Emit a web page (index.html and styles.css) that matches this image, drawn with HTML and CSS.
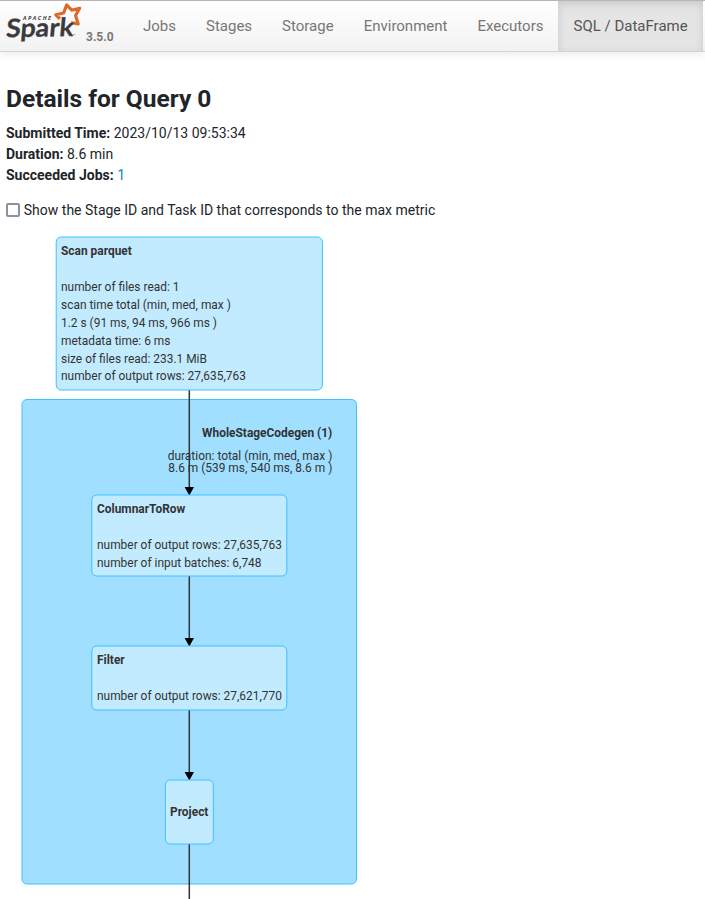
FILE: index.html
```html
<!DOCTYPE html>
<html lang="en">
<head>
<meta charset="utf-8">
<title>Details for Query 0</title>
<link rel="stylesheet" href="styles.css">
</head>
<body>
<nav class="navbar">
  <a class="brand" href="#">
    <svg class="logo" width="78" height="46" viewBox="0 0 78 46" aria-label="Apache Spark">
      <path class="star" d="M54 17.8 L49.8 13.8 L57.6 12 L60.6 4 L65.8 9.2 L73.6 7.2 L69.6 14.6 L72.2 23 L65 21.6"/>
      <g transform="translate(-.5 36.2) rotate(-1) skewX(-6)">
        <text class="logo-name" x="0" y="0" textLength="67.5" lengthAdjust="spacingAndGlyphs">Spark</text>
      </g>
      <text class="logo-top" x="17" y="19" textLength="28">APACHE</text>
      <text class="logo-tm" x="67" y="36">™</text>
    </svg>
    <span class="version">3.5.0</span>
  </a>
  <ul class="tabs">
    <li><a href="#">Jobs</a></li>
    <li><a href="#">Stages</a></li>
    <li><a href="#">Storage</a></li>
    <li><a href="#">Environment</a></li>
    <li><a href="#">Executors</a></li>
    <li class="active"><a href="#">SQL / DataFrame</a></li>
  </ul>
</nav>
<main>
  <h3>Details for Query 0</h3>
  <ul class="summary">
    <li><strong>Submitted Time:</strong> 2023/10/13 09:53:34</li>
    <li><strong>Duration:</strong> 8.6 min</li>
    <li><strong>Succeeded Jobs:</strong> <a href="#">1</a></li>
  </ul>
  <label class="toggle"><input type="checkbox"><span>Show the Stage ID and Task ID that corresponds to the max metric</span></label>
</main>
<svg class="plan" width="705" height="671" viewBox="0 228 705 671">
  <rect class="cluster" x="22" y="399.5" width="334.5" height="484.5" rx="5"/>
  <text class="title" x="332.3" y="437" text-anchor="end">WholeStageCodegen (1)</text>
  <text x="332.3" y="460" text-anchor="end">duration: total (min, med, max )</text>
  <text x="332.3" y="472" text-anchor="end">8.6 m (539 ms, 540 ms, 8.6 m )</text>

  <g class="edges">
    <path d="M189.3 390V488M189.3 576V639M189.3 710V773M189.3 844V899"/>
    <path class="head" d="M184.6 487h9.4l-4.7 8.5zM184.6 638h9.4l-4.7 8.5zM184.6 772h9.4l-4.7 8.5z"/>
  </g>

  <rect class="node" x="56.2" y="237" width="266.2" height="153" rx="5"/>
  <text class="title" x="61" y="255">Scan parquet</text>
  <text x="61" y="291">number of files read: 1</text>
  <text x="61" y="309">scan time total (min, med, max )</text>
  <text x="61" y="327">1.2 s (91 ms, 94 ms, 966 ms )</text>
  <text x="61" y="345">metadata time: 6 ms</text>
  <text x="61" y="363">size of files read: 233.1 MiB</text>
  <text x="61" y="380">number of output rows: 27,635,763</text>

  <rect class="node" x="91.8" y="495" width="195" height="81" rx="5"/>
  <text class="title" x="97" y="513">ColumnarToRow</text>
  <text x="97" y="549">number of output rows: 27,635,763</text>
  <text x="97" y="567">number of input batches: 6,748</text>

  <rect class="node" x="91.8" y="646" width="195" height="64" rx="5"/>
  <text class="title" x="97" y="664">Filter</text>
  <text x="97" y="700">number of output rows: 27,621,770</text>

  <rect class="node" x="165.3" y="780" width="48" height="64" rx="5"/>
  <text class="title" x="170" y="816">Project</text>
</svg>
</body>
</html>
```

FILE: styles.css
```css
* { box-sizing: border-box; }

body {
  margin: 0;
  overflow: hidden;
  background: #fff;
  color: #212529;
  font: 14px/21px Roboto, sans-serif;
}

a { color: #0088cc; text-decoration: none; }
ul { list-style: none; margin: 0; padding: 0; }

.navbar {
  display: flex;
  height: 52px;
  border-top: 1px solid #b5b5b5;
  border-bottom: 1px solid #d4d4d4;
  background: linear-gradient(#fff, #f2f2f2);
  box-shadow: 0 1px 10px rgba(0, 0, 0, .1);
}

.brand {
  display: flex;
  width: 128px;
  padding-left: 6px;
}

.logo { flex: none; overflow: visible; }
.star { fill: none; stroke: #dd6a2c; stroke-width: 3.2; stroke-linejoin: round; }
.logo-name { font: 700 25.5px Lato, sans-serif; fill: #3c3a3e; stroke: #3c3a3e; stroke-width: .3; }
.logo-top { font: italic 700 5.5px "Open Sans", sans-serif; fill: #3c3a3e; }
.logo-tm { font: 4px Roboto, sans-serif; fill: #3c3a3e; }

.version {
  margin: 26px 0 0 2px;
  color: #777;
  font-size: 12px;
  font-weight: 700;
}

.tabs { display: flex; }

.tabs a {
  display: block;
  height: 50px;
  padding: 0 15px;
  color: #777;
  font-size: 15px;
  line-height: 50px;
  white-space: nowrap;
}

.tabs .active a {
  margin-left: -.6px;
  padding-left: 15.6px;
  color: #555;
  background: #e5e5e5;
  box-shadow: inset 0 3px 8px rgba(0, 0, 0, .125);
}

main { height: 176px; padding: 32px 6px 0; }
h3 { margin: 0 0 9px; font-size: 24.5px; line-height: 30px; font-weight: 700; }

.toggle { display: flex; align-items: center; margin-top: 14px; }

.toggle input {
  appearance: none;
  flex: none;
  width: 14px;
  height: 14px;
  margin: 0 3.8px 2px 0;
  border: 2px solid #8f8f9d;
  border-radius: 2px;
  background: #fff;
}

.plan { display: block; }
.plan text { font: 11.93px Roboto, sans-serif; fill: #333; }
.plan .title { font-weight: 700; }
.cluster { fill: #a0dfff; stroke: #3ec0ff; }
.node { fill: #c3ebff; stroke: #3ec0ff; }
.edges path { fill: none; stroke: #333; stroke-width: 1.5; }
.edges .head { fill: #000; stroke: none; }
```
